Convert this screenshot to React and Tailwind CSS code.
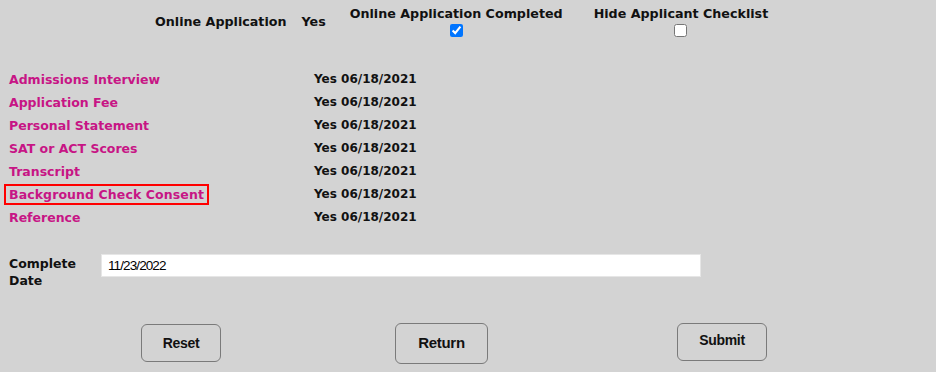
import React, { useState } from 'react';

const items = [
  'Admissions Interview',
  'Application Fee',
  'Personal Statement',
  'SAT or ACT Scores',
  'Transcript',
  'Background Check Consent',
  'Reference',
];

const App = () => {
  const [completed, setCompleted] = useState(true);
  const [hide, setHide] = useState(false);
  const [date, setDate] = useState('11/23/2022');

  return (
    <div className="w-[936px] h-[372px] bg-[#d3d3d3] text-[#111] font-['DejaVu_Sans',sans-serif] overflow-hidden">
      {/* header */}
      <div className="flex items-center pl-[155px] pt-[6px] text-[12.7px] font-bold leading-[15px]">
        <span>Online Application</span>
        <span className="ml-[15px]">Yes</span>
        <div className="ml-[24px] flex flex-col items-center">
          <span>Online Application Completed</span>
          <input
            type="checkbox"
            checked={completed}
            onChange={(e) => setCompleted(e.target.checked)}
            className="m-0 mt-[3px] block w-[13px] h-[13px]"
          />
        </div>
        <div className="ml-[31px] flex flex-col items-center">
          <span>Hide Applicant Checklist</span>
          <input
            type="checkbox"
            checked={hide}
            onChange={(e) => setHide(e.target.checked)}
            className="m-0 mt-[3px] block w-[13px] h-[13px]"
          />
        </div>
      </div>

      {/* checklist */}
      <div className="mt-[31px] pl-[9px] font-bold">
        {items.map((item) => (
          <div key={item} className="grid grid-cols-[305px_auto] items-center h-[23px]">
            {item === 'Background Check Consent' ? (
              <span className="justify-self-start -ml-[5px] px-[3px] py-[1px] text-[12.5px] tracking-[0.1px] leading-[15px] border-2 border-[#ff0000] text-[#c71585]">
                {item}
              </span>
            ) : (
              <span className="text-[12.5px] leading-[15px] text-[#c71585]">{item}</span>
            )}
            <span className="text-[12px] leading-[15px]">Yes 06/18/2021</span>
          </div>
        ))}
      </div>

      {/* complete date */}
      <div className="mt-[25px] flex items-start pl-[9px]">
        <div className="w-[92px] pt-[1px] text-[12.5px] font-bold leading-[17px]">
          Complete
          <br />
          Date
        </div>
        <input
          type="text"
          value={date}
          onChange={(e) => setDate(e.target.value)}
          className="w-[600px] h-[23px] bg-white border border-[#e6e6e6] px-[6px] text-[13.5px] tracking-[-0.9px] font-['Liberation_Sans',sans-serif] text-[#000] outline-none"
        />
      </div>

      {/* buttons */}
      <div className="mt-[34px] flex items-start pl-[141px] font-['Liberation_Sans',sans-serif] font-bold text-[14px] tracking-[-0.3px] text-[#111]">
        <button className="mt-[1px] w-[80px] h-[38px] rounded-[6px] border border-[#7a7a7a] bg-transparent">
          Reset
        </button>
        <button className="ml-[174px] w-[93px] h-[41px] rounded-[6px] border border-[#7a7a7a] bg-transparent text-[15px]">
          Return
        </button>
        <button className="ml-[189px] w-[90px] h-[38px] rounded-[6px] border border-[#7a7a7a] bg-transparent pb-[3px]">
          Submit
        </button>
      </div>
    </div>
  );
};

export default App;
